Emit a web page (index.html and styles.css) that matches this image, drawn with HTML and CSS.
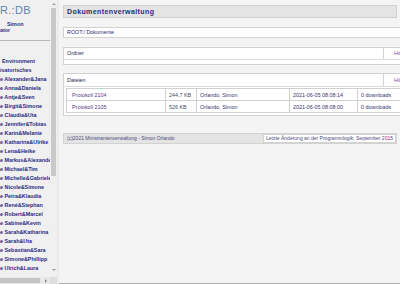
FILE: index.html
```html
<!DOCTYPE html>
<html lang="de">
<head>
<meta charset="utf-8">
<title>Dokumentenverwaltung</title>
<link rel="stylesheet" href="styles.css">
</head>
<body>
<div class="frames">
  <aside class="nav-frame">
    <div class="nav-view">
      <div class="nav-content">
        <div class="logo">R<span class="dot">.</span>:DB</div>
        <div class="user">
          <div class="u1">Simon</div>
          <div class="u2">ator</div>
        </div>
        <hr class="sep">
        <ul class="menu">
          <li class="first">Environment</li>
          <li>isatorisches</li>
          <li>e Alexander&amp;Jana</li>
          <li>e Anna&amp;Daniela</li>
          <li>e Antje&amp;Sven</li>
          <li>e Birgit&amp;Simone</li>
          <li>e Claudia&amp;Uta</li>
          <li>e Jennifer&amp;Tobias</li>
          <li>e Karin&amp;Melanie</li>
          <li>e Katharina&amp;Ulrike</li>
          <li>e Lena&amp;Heike</li>
          <li>e Markus&amp;Alexander</li>
          <li>e Michael&amp;Tim</li>
          <li>e Michelle&amp;Gabriele</li>
          <li>e Nicole&amp;Simone</li>
          <li>e Petra&amp;Klaudia</li>
          <li>e René&amp;Stephan</li>
          <li>e Robert&amp;Marcel</li>
          <li>e Sabine&amp;Kevin</li>
          <li>e Sarah&amp;Katharina</li>
          <li>e Sarah&amp;Uta</li>
          <li>e Sebastian&amp;Sara</li>
          <li>e Simone&amp;Phillipp</li>
          <li>e Ulrich&amp;Laura</li>
        </ul>
      </div>
      <div class="vscroll">
        <div class="sb-btn"><span class="tri-up"></span></div>
        <div class="vthumb"></div>
        <div class="vtrack"></div>
        <div class="sb-btn down"><span class="tri-down"></span></div>
      </div>
    </div>
    <div class="hscroll">
      <div class="hthumb"></div>
      <div class="htrack"><span class="tri-right"></span></div>
      <div class="corner"></div>
    </div>
  </aside>
  <div class="frame-border"></div>
  <main class="content">
    <div class="title">Dokumentenverwaltung</div>
    <div class="path">ROOT:/ Dokumente</div>

    <div class="box">
      <div class="box-head">
        <span class="h-label">Ordner</span>
        <span class="h-action">Hinzufügen</span>
      </div>
      <div class="box-body"></div>
    </div>

    <div class="box files">
      <div class="box-head tall">
        <span class="h-label">Dateien</span>
        <span class="h-action">Hinzufügen</span>
      </div>
      <div class="file-wrap">
        <table class="file-table">
          <colgroup>
            <col class="c1"><col class="c2"><col class="c3"><col class="c4"><col>
          </colgroup>
          <tr>
            <td class="name">Protokoll 2104</td>
            <td class="size">244,7 KB</td>
            <td>Orlando, Simon</td>
            <td>2021-06-05 08:08:14</td>
            <td>0 downloads</td>
          </tr>
          <tr>
            <td class="name">Protokoll 2105</td>
            <td class="size">526 KB</td>
            <td>Orlando, Simon</td>
            <td>2021-06-05 08:08:00</td>
            <td>0 downloads</td>
          </tr>
        </table>
      </div>
    </div>

    <div class="footer">
      <span class="foot-left">(c)2021 Ministrantenverwaltung - Simon Orlando</span>
      <span class="foot-right">Letzte Änderung an der Programmlogik: September 2015</span>
    </div>
  </main>
</div>
</body>
</html>
```

FILE: styles.css
```css
* { box-sizing: border-box; margin: 0; padding: 0; }
html, body { width: 400px; height: 284px; overflow: hidden; }
body {
  font-family: "Liberation Sans", Arial, sans-serif;
  background: #f4f4f4;
  color: #2e2e78;
}
.frames { display: flex; height: 284px; }

/* ---------- left navigation frame ---------- */
.nav-frame {
  width: 57px; flex: none;
  display: flex; flex-direction: column;
  background: #f0f0f0;
}
.nav-view { flex: 1; display: flex; min-height: 0; }
.nav-content { width: 50px; overflow: hidden; white-space: nowrap; }
.logo {
  height: 17px; padding-top: 3px;
  font-size: 11px; line-height: 14px;
  color: #5f86ad; letter-spacing: 0.3px;
}
.logo .dot { color: #e0703a; }
.user {
  margin-top: 4px;
  font-size: 5.4px; font-weight: bold; line-height: 6px;
  color: #2e2e80;
}
.u1 { padding-left: 7px; }
.sep { border: 0; border-top: 1px solid #b8b8b8; margin-top: 7px; height: 0; }
.menu {
  list-style: none; margin-top: 16px;
  font-size: 5.4px; font-weight: bold; line-height: 9px;
  color: #2b2b82;
}
.menu .first { padding-left: 2px; }

.vscroll {
  width: 7px; flex: none;
  display: flex; flex-direction: column;
  background: #f0f0f0;
}
.sb-btn { height: 7px; display: flex; align-items: center; justify-content: center; }
.sb-btn.down { margin-bottom: 4px; }
.tri-up { border-left: 2px solid transparent; border-right: 2px solid transparent; border-bottom: 2px solid #9c9c9c; }
.tri-down { border-left: 2px solid transparent; border-right: 2px solid transparent; border-top: 2px solid #9c9c9c; }
.vthumb { height: 168px; margin: 1px 1px 0; background: #c9c9c9; }
.vtrack { flex: 1; }

.hscroll { height: 7px; flex: none; display: flex; background: #e8e8e8; }
.hthumb { width: 40px; margin: 1px 0; background: #c4c4c4; }
.htrack { flex: 1; display: flex; align-items: center; justify-content: flex-end; padding-right: 3px; }
.tri-right { border-top: 2px solid transparent; border-bottom: 2px solid transparent; border-left: 2px solid #8a8a8a; }
.corner { width: 7px; background: #dedede; }

.frame-border { width: 2px; flex: none; background: #ebebeb; }

/* ---------- main frame ---------- */
.content {
  flex: 1; min-width: 0; overflow: hidden;
  padding: 5px 0 0 4px;
  border-bottom: 1px solid #b0b0b0;
  white-space: nowrap;
}
.title {
  width: 334px; height: 13px;
  background: #e4e4e4; border: 1px solid #d2d2d2;
  padding-left: 3px;
  font-size: 7px; font-weight: bold; letter-spacing: 0.4px; line-height: 11px;
  color: #2c2c7c;
}
.path {
  width: 360px; height: 11px; margin-top: 9px;
  background: #fff; border: 1px solid #d2d2d2;
  padding-left: 3px;
  font-size: 5.4px; line-height: 9px;
  color: #2a2a80;
}
.box {
  width: 360px; margin-top: 9px;
  background: #fff; border: 1px solid #d2d2d2;
}
.box.files { margin-top: 8px; }
.box-head {
  display: flex; height: 12px;
  border-bottom: 1px solid #dcdcdc;
  font-size: 5.4px; line-height: 11px;
}
.box-head.tall { height: 13px; line-height: 12px; }
.h-label { flex: 1; padding-left: 3px; color: #2a2a50; }
.h-action { width: 39px; border-left: 1px solid #d2d2d2; padding-left: 10px; color: #7a4e9e; }
.box-body { height: 4px; }

.file-wrap { padding: 1px 2px 2px; }
.file-table {
  width: 354px; table-layout: fixed; border-collapse: collapse;
  font-size: 5.4px; color: #3a3570;
}
.file-table col.c1 { width: 99px; }
.file-table col.c2 { width: 31px; }
.file-table col.c3 { width: 93px; }
.file-table col.c4 { width: 68px; }
.file-table td {
  height: 12px; padding: 0 3px;
  border: 1px solid #d0d0d0;
  line-height: 10px; overflow: hidden;
}
.file-table td.name { padding-left: 5px; color: #573a82; }
.file-table td.size { color: #4a4a62; }

.footer {
  width: 334px; height: 11px; margin-top: 17px;
  display: flex;
  background: #e4e4e4; border: 1px solid #d2d2d2;
  font-size: 5px; line-height: 9px;
  color: #4a4a7a;
}
.foot-left { flex: 1; padding-left: 3px; }
.foot-right { background: #fff; border: 1px solid #d2d2d2; margin: 0 0 0 0; padding: 0 2px; line-height: 7px; }
```
